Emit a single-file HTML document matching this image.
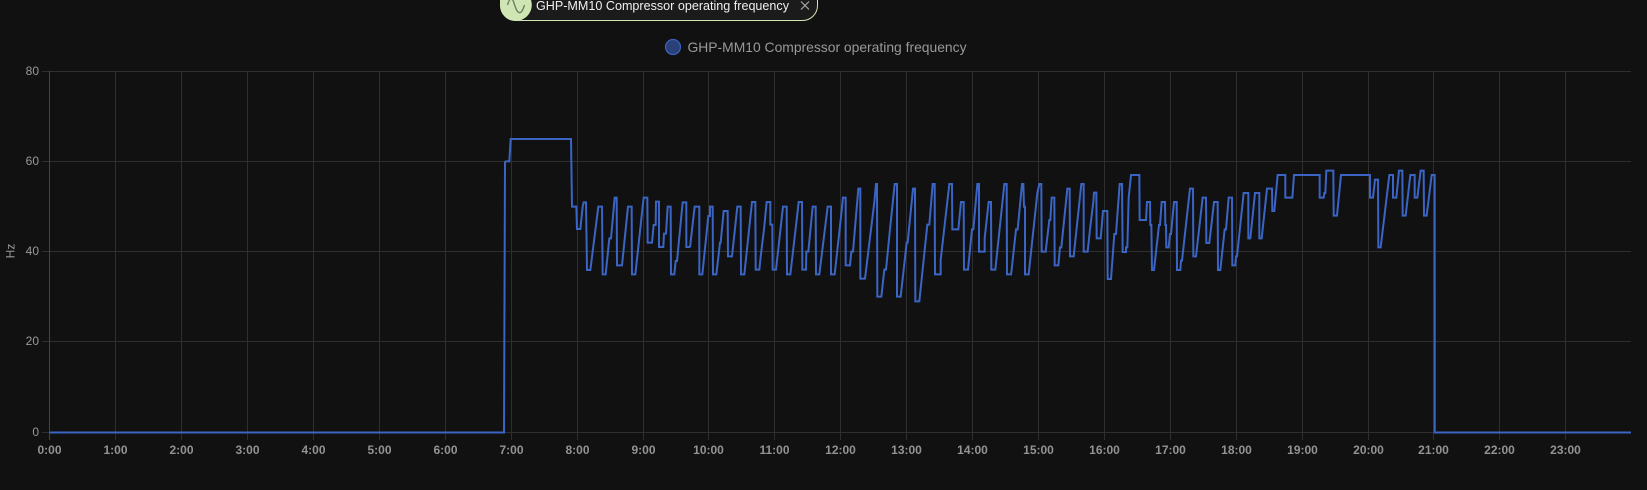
<!DOCTYPE html>
<html><head><meta charset="utf-8">
<style>
html,body{margin:0;padding:0;background:#111111;width:1647px;height:490px;overflow:hidden}
svg{display:block}
text{font-family:"Liberation Sans",sans-serif}
</style></head>
<body>
<svg width="1647" height="490" viewBox="0 0 1647 490" xmlns="http://www.w3.org/2000/svg">
<rect width="1647" height="490" fill="#111111"/>
<!-- chip -->
<rect x="500.5" y="-30" width="317" height="50.5" rx="15" fill="#1b1b1b" stroke="#d3e6b6" stroke-width="1"/>
<circle cx="516" cy="5" r="15.8" fill="#cfe6b4"/>
<path d="M507.5 5 C510 -3 512 -3 514 3 C516 10 518 13.5 520.5 12.5 C522.5 11.5 523.5 8 524.5 5" fill="none" stroke="#6f7f62" stroke-width="1.4"/>
<text x="536" y="10" font-size="13" fill="#f0f0f0" textLength="253" lengthAdjust="spacingAndGlyphs">GHP-MM10 Compressor operating frequency</text>
<path d="M801 1.5 L809 9.5 M809 1.5 L801 9.5" stroke="#a8a8a8" stroke-width="1.2" fill="none"/>
<!-- legend -->
<circle cx="673" cy="47" r="7.5" fill="#2a4078" stroke="#3a63bd" stroke-width="1.2"/>
<text x="687.5" y="52" font-size="14" fill="#999999" textLength="279" lengthAdjust="spacingAndGlyphs">GHP-MM10 Compressor operating frequency</text>
<!-- horizontal grid -->
<g stroke="#2f2f2f" stroke-width="1">
<path d="M42 71.5H1631M42 161.5H1631M42 251.5H1631M42 341.5H1631M42 432.5H1631"/>
</g>
<!-- vertical grid -->
<g stroke="#2f2f2f" stroke-width="1">
<path d="M115.5 71V440M181.5 71V440M247.5 71V440M313.5 71V440M379.5 71V440M445.5 71V440M511.5 71V440M577.5 71V440M643.5 71V440M708.5 71V440M774.5 71V440M840.5 71V440M906.5 71V440M972.5 71V440M1038.5 71V440M1104.5 71V440M1170.5 71V440M1236.5 71V440M1302.5 71V440M1368.5 71V440M1433.5 71V440M1499.5 71V440M1565.5 71V440"/>
</g>
<path d="M49.5 71V440" stroke="#444444" stroke-width="1"/>
<!-- y labels -->
<g font-size="12" fill="#999999" text-anchor="end">
<text x="39" y="75">80</text>
<text x="39" y="165">60</text>
<text x="39" y="255">40</text>
<text x="39" y="345">20</text>
<text x="39" y="436">0</text>
</g>
<text transform="translate(14.5,251) rotate(-90)" font-size="12" fill="#999999" text-anchor="middle">Hz</text>
<!-- x labels -->
<g font-size="12" font-weight="700" fill="#939393" text-anchor="middle">
<text x="49.5" y="454">0:00</text><text x="115.5" y="454">1:00</text><text x="181.5" y="454">2:00</text><text x="247.5" y="454">3:00</text><text x="313.5" y="454">4:00</text><text x="379.5" y="454">5:00</text><text x="445.5" y="454">6:00</text><text x="511.5" y="454">7:00</text><text x="577.5" y="454">8:00</text><text x="643.5" y="454">9:00</text><text x="708.5" y="454">10:00</text><text x="774.5" y="454">11:00</text><text x="840.5" y="454">12:00</text><text x="906.5" y="454">13:00</text><text x="972.5" y="454">14:00</text><text x="1038.5" y="454">15:00</text><text x="1104.5" y="454">16:00</text><text x="1170.5" y="454">17:00</text><text x="1236.5" y="454">18:00</text><text x="1302.5" y="454">19:00</text><text x="1368.5" y="454">20:00</text><text x="1433.5" y="454">21:00</text><text x="1499.5" y="454">22:00</text><text x="1565.5" y="454">23:00</text>
</g>
<!-- data -->
<g fill="none" stroke="#3a65c4" stroke-linejoin="miter">
<path stroke-width="2" d="M49.5 432.5H504L505 161.3"/>
<path stroke-width="2" d="M1434.7 290V432.5H1631"/>
<g transform="translate(490,120) scale(.33333)" stroke-width="6">
<path d="M45 124L58 124L62 57L243 57L246 260L259 260L261 327L271 327L278 260L281 247L288 247L291 450L301 450L325 260L336 260L338 463L347 463L358 355L363 355L374 233L380 233L381 436L396 436L414 260L425 260L426 463L436 463L458 260L461 233L472 233L473 368L486 368L491 315L497 315L498 245L507 245L507 381L520 381L522 341L528 341L533 260L542 260L543 463L553 463L557 423L561 423L578 247L589 247L589 381L600 381"/>
</g>
<g transform="translate(690,160) scale(.33333)" stroke-width="6">
<path d="M0 262L14 140L28 140L28 343L37 343L55 168L60 168L60 140L68 140L69 343L79 343L90 248L92 248L101 153L113 153L114 289L126 289L142 140L152 140L153 343L163 343L186 126L196 126L197 329L208 329L212 290L222 208L230 126L241 126L241 194L247 194L248 329L258 329L279 140L290 140L291 343L301 343L320 180L326 126L336 126L337 329L348 329L349 275L355 275L368 140L377 140L378 343L388 343L413 140L423 140L423 343L434 343L452 180L459 113L467 113L467 316L480 316L484 275L489 275L505 86L511 86L511 356L525 356L553 126L558 72L561 72L562 410L574 410L583 329L588 329L600 208"/>
</g>
<g transform="translate(890,160) scale(.33333)" stroke-width="6">
<path d="M0 208L14 72L21 72L21 410L32 410L50 248L53 248L69 86L75 86L76 424L88 424L112 194L118 194L128 72L134 72L135 343L152 343L152 300L178 72L186 72L187 208L205 208L213 126L221 126L222 329L234 329L246 208L250 208L262 72L267 72L267 275L284 275L284 235L296 126L303 126L304 329L316 329L343 72L350 72L351 343L363 343L365 329L378 208L383 208L396 72L400 72L402 140L405 140L405 343L416 343L442 99L448 72L454 72L455 275L467 275L478 180L481 180L485 113L493 113L494 316L505 316L510 262L514 262L532 86L539 86L540 289L551 289L574 72L581 72L581 275L593 275L600 208"/>
</g>
<g transform="translate(1090,150) scale(.33333)" stroke-width="6">
<path d="M0 238L10 155L12 128L19 128L20 265L32 265L39 183L52 183L53 387L63 387L73 252L78 252L89 102L96 102L98 306L108 306L108 292L112 292L116 143L123 75L148 75L149 210L168 210L171 156L180 156L181 225L184 225L186 360L192 360L207 225L210 225L215 156L225 156L226 225L228 225L229 292L236 292L240 252L243 252L252 156L260 156L261 360L271 360L273 332L276 332L300 116L309 116L310 319L318 319L338 143L348 143L349 279L358 279L372 156L383 156L384 360L391 360L404 238L408 238L416 143L426 143L427 346L436 346L438 319L441 319L461 129L475 129L475 265L481 265L495 129L508 129L508 265L515 265L531 116L546 116L547 183L553 183L563 75L586 75L586 143L600 143"/>
</g>
<g transform="translate(1290,150) scale(.33333)" stroke-width="6">
<path d="M0 143L7 143L12 75L89 75L89 143L101 143L103 129L106 129L109 62L130 62L131 197L141 197L153 75L240 75L240 143L249 143L255 89L264 89L265 292L272 292L298 75L309 75L309 143L319 143L327 62L337 62L338 197L347 197L361 75L374 75L374 143L382 143L392 62L401 62L402 197L410 197L425 75L434 75L434 420"/>
</g>
</g>
</svg>
</body></html>
